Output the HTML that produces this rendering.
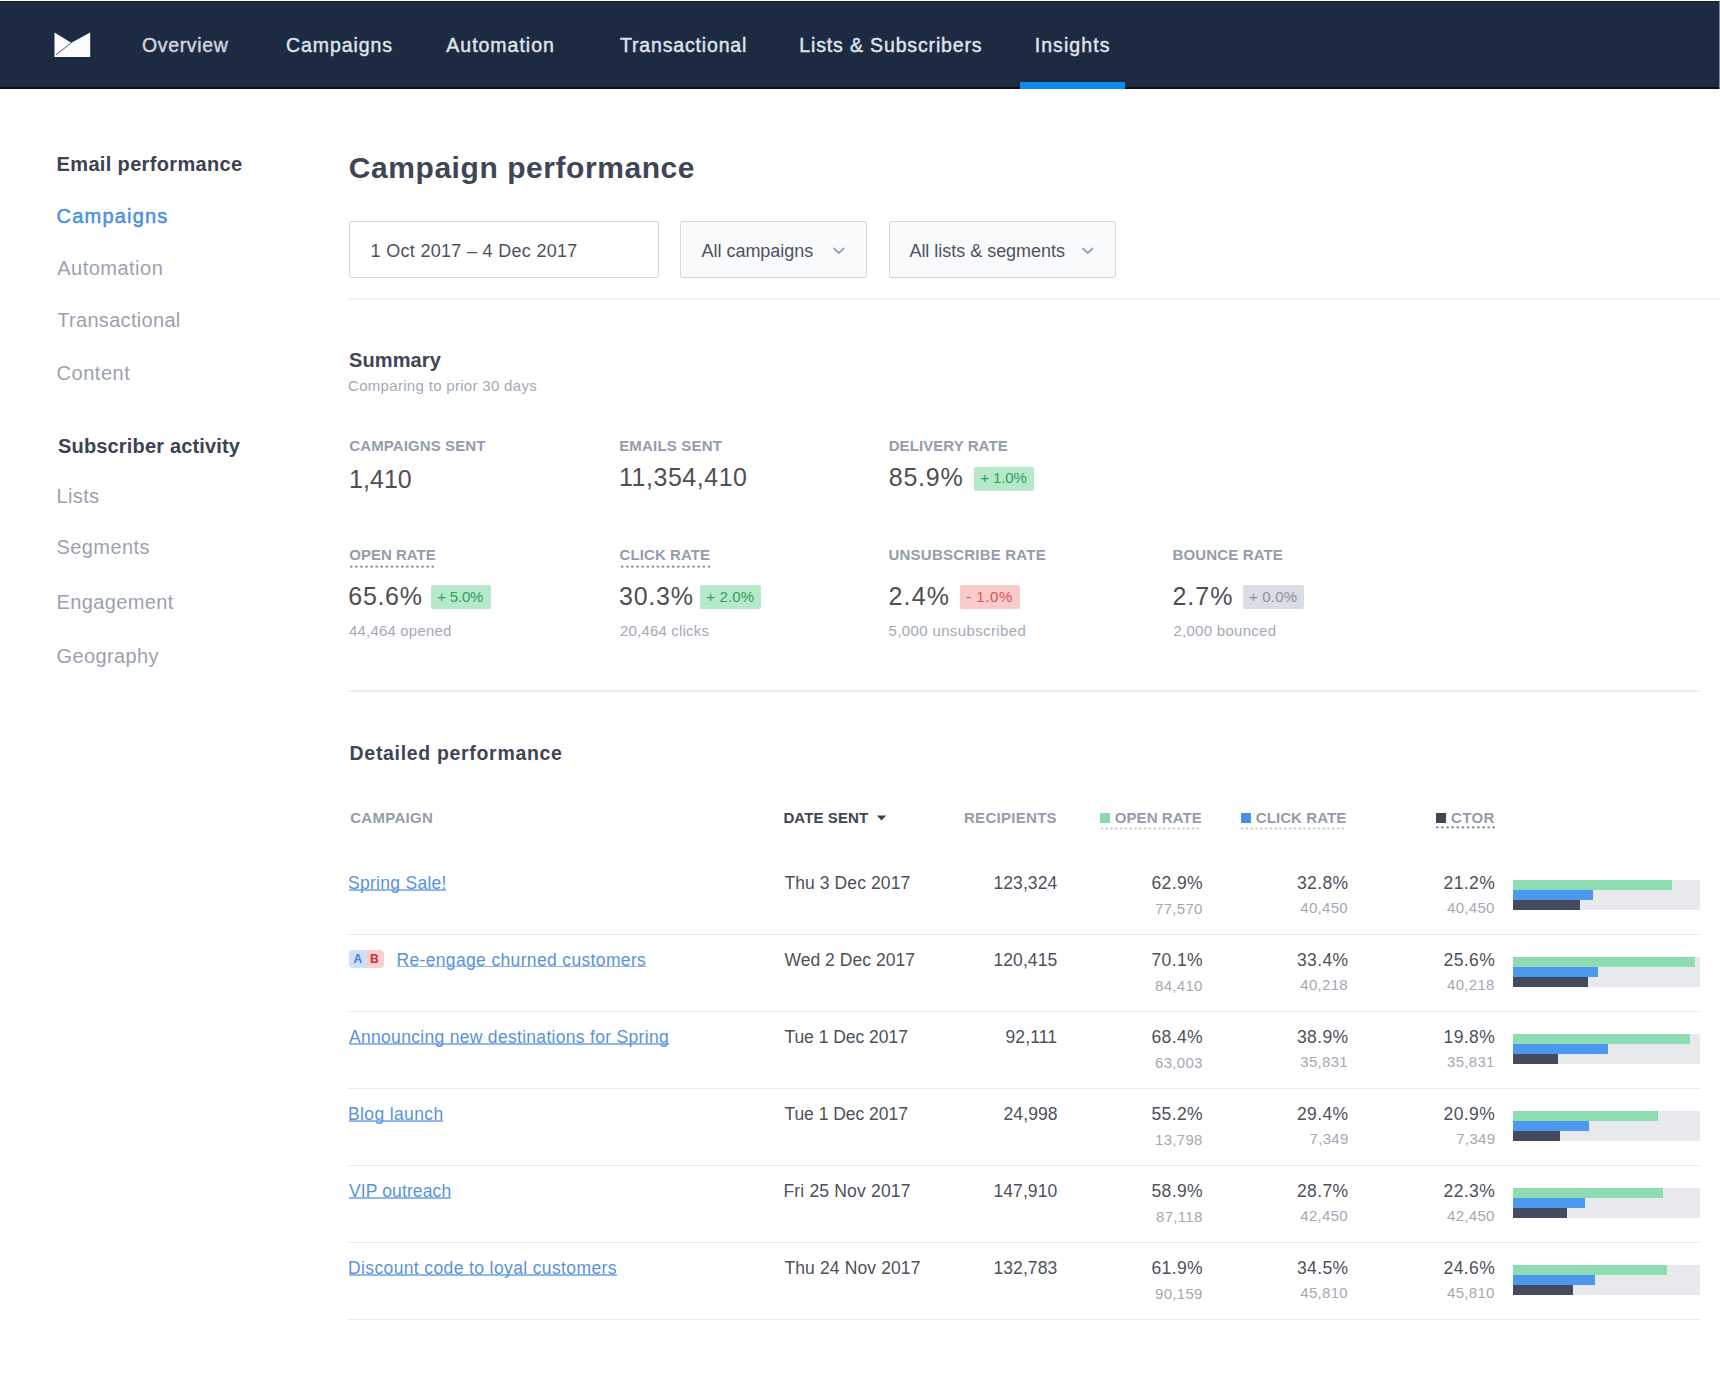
<!DOCTYPE html>
<html><head><meta charset="utf-8"><title>Campaign performance</title>
<style>
html,body{margin:0;padding:0;background:#fff;width:1720px;height:1396px;overflow:hidden;position:relative}
.t{position:absolute;white-space:pre;font-family:"Liberation Sans", sans-serif}
.r{position:absolute}
</style></head><body>
<div class=r style="left:0;top:0;width:1720px;height:1px;background:#fff"></div>
<div class=r style="left:0;top:1px;width:1719px;height:87px;background:#1c2a42"></div>
<div class=r style="left:0;top:1px;width:1719px;height:1px;background:#141c2a"></div>
<div class=r style="left:0;top:87px;width:1719px;height:2px;background:#0b0f16"></div>
<div class=r style="left:1719px;top:1px;width:1px;height:88px;background:#7a879c"></div>
<svg class=r style="left:54px;top:32px" width="37" height="26" viewBox="0 0 37 26">
  <polygon points="0.5,0.5 17.3,10.8 36.2,0.5 36.2,25 0.5,25" fill="#fafbfc"/>
  <line x1="2.3" y1="22.6" x2="17.3" y2="10.8" stroke="#4a5568" stroke-width="1"/>
</svg>
<div class=r style="left:1020px;top:82px;width:105px;height:7px;background:#0f8bec"></div>

<div class=r style="left:349px;top:221px;width:308px;height:55px;border:1px solid #d6d9de;border-bottom:1.5px solid #d0d3d8;border-radius:3px;background:#fff"></div>
<div class=r style="left:680px;top:221px;width:184.5px;height:55px;border:1px solid #d6d9de;border-bottom:1.5px solid #d0d3d8;border-radius:3px;background:#f9fafb"></div>
<div class=r style="left:888.5px;top:221px;width:225px;height:55px;border:1px solid #d6d9de;border-bottom:1.5px solid #d0d3d8;border-radius:3px;background:#f9fafb"></div>
<svg class=r style="left:830px;top:244px" width="18" height="14" viewBox="0 0 18 14"><polyline points="4,4.5 8.8,9 13.6,4.5" fill="none" stroke="#9ea2ab" stroke-width="1.8" stroke-linecap="round" stroke-linejoin="round"/></svg>
<svg class=r style="left:1079px;top:244px" width="18" height="14" viewBox="0 0 18 14"><polyline points="4,4.5 8.8,9 13.6,4.5" fill="none" stroke="#9ea2ab" stroke-width="1.8" stroke-linecap="round" stroke-linejoin="round"/></svg>
<div class=r style="left:348px;top:298px;width:1372px;height:2px;background:#f0f1f3"></div>

<div class=r style="left:974px;top:467px;width:60px;height:23.5px;background:#b6e9c9;border-radius:2px"></div>
<div class=r style="left:431px;top:584.5px;width:60px;height:24.5px;background:#b6e9c9;border-radius:2px"></div>
<div class=r style="left:700px;top:584.5px;width:61px;height:24.5px;background:#b6e9c9;border-radius:2px"></div>
<div class=r style="left:959.5px;top:584.5px;width:60.5px;height:24.5px;background:#f9cbcb;border-radius:2px"></div>
<div class=r style="left:1243px;top:584.5px;width:61px;height:24.5px;background:#dadde3;border-radius:2px"></div>
<svg class=r style="left:350px;top:565px" width="86" height="3"><line x1="0" y1="1.6" x2="86" y2="1.6" stroke="#7f8592" stroke-width="1.7" stroke-dasharray="2.4 2.7"/></svg>
<svg class=r style="left:620.5px;top:565px" width="90" height="3"><line x1="0" y1="1.6" x2="90" y2="1.6" stroke="#7f8592" stroke-width="1.7" stroke-dasharray="2.4 2.7"/></svg>

<div class=r style="left:348px;top:690px;width:1352px;height:1.5px;background:#eceef0"></div>

<div class=r style="left:1099.7px;top:813.4px;width:10px;height:9.6px;background:#8dd9ad"></div>
<div class=r style="left:1241px;top:813.4px;width:10px;height:9.6px;background:#4a8ee6"></div>
<div class=r style="left:1436px;top:813.4px;width:10px;height:9.6px;background:#3f4756"></div>
<svg class=r style="left:1100.5px;top:826.5px" width="101" height="3"><line x1="0" y1="1.5" x2="102" y2="1.5" stroke="#b3b7bf" stroke-width="1.6" stroke-dasharray="2 2.8"/></svg>
<svg class=r style="left:1241px;top:826.5px" width="106" height="3"><line x1="0" y1="1.5" x2="106" y2="1.5" stroke="#b3b7bf" stroke-width="1.6" stroke-dasharray="2 2.8"/></svg>
<svg class=r style="left:1436px;top:826px" width="59" height="3"><line x1="0" y1="1.4" x2="59" y2="1.4" stroke="#7a808c" stroke-width="1.6" stroke-dasharray="2.5 2.64"/></svg>
<svg class=r style="left:876px;top:815px" width="11" height="6" viewBox="0 0 11 6"><polygon points="0.8,0.5 10.2,0.5 5.5,5.5" fill="#3e4656"/></svg>

<div class=r style="left:349px;top:950px;width:17.5px;height:17.5px;background:#d0e1f7;border-radius:4px 0 0 4px"></div>
<div class=r style="left:366.5px;top:950px;width:17px;height:17.5px;background:#f8cfd0;border-radius:0 4px 4px 0"></div>
<div class=t style="left:353.5px;top:953px;font-size:12px;line-height:12px;font-weight:700;color:#3d7fd9">A</div>
<div class=t style="left:370px;top:953px;font-size:12px;line-height:12px;font-weight:700;color:#c9302c">B</div>

<div class=r style='left:1513px;top:880px;width:187px;height:30px;background:#e8e9ec'></div><div class=r style='left:1513px;top:880px;width:159.0px;height:10px;background:#8edcb1'></div><div class=r style='left:1513px;top:890px;width:79.6px;height:10px;background:#4c98ef'></div><div class=r style='left:1513px;top:900px;width:66.8px;height:10px;background:#434b5c'></div><div class=r style='left:348px;top:933.5px;width:1352px;height:1.5px;background:#ebebed'></div><div class=r style='left:1513px;top:957px;width:187px;height:30px;background:#e8e9ec'></div><div class=r style='left:1513px;top:957px;width:182.4px;height:10px;background:#8edcb1'></div><div class=r style='left:1513px;top:967px;width:84.9px;height:10px;background:#4c98ef'></div><div class=r style='left:1513px;top:977px;width:74.6px;height:10px;background:#434b5c'></div><div class=r style='left:348px;top:1010.5px;width:1352px;height:1.5px;background:#ebebed'></div><div class=r style='left:1513px;top:1034px;width:187px;height:30px;background:#e8e9ec'></div><div class=r style='left:1513px;top:1034px;width:177.0px;height:10px;background:#8edcb1'></div><div class=r style='left:1513px;top:1044px;width:94.8px;height:10px;background:#4c98ef'></div><div class=r style='left:1513px;top:1054px;width:44.8px;height:10px;background:#434b5c'></div><div class=r style='left:348px;top:1087.5px;width:1352px;height:1.5px;background:#ebebed'></div><div class=r style='left:1513px;top:1111px;width:187px;height:30px;background:#e8e9ec'></div><div class=r style='left:1513px;top:1111px;width:144.9px;height:10px;background:#8edcb1'></div><div class=r style='left:1513px;top:1121px;width:76.0px;height:10px;background:#4c98ef'></div><div class=r style='left:1513px;top:1131px;width:47.3px;height:10px;background:#434b5c'></div><div class=r style='left:348px;top:1164.5px;width:1352px;height:1.5px;background:#ebebed'></div><div class=r style='left:1513px;top:1188px;width:187px;height:30px;background:#e8e9ec'></div><div class=r style='left:1513px;top:1188px;width:150.2px;height:10px;background:#8edcb1'></div><div class=r style='left:1513px;top:1198px;width:71.9px;height:10px;background:#4c98ef'></div><div class=r style='left:1513px;top:1208px;width:53.7px;height:10px;background:#434b5c'></div><div class=r style='left:348px;top:1241.5px;width:1352px;height:1.5px;background:#ebebed'></div><div class=r style='left:1513px;top:1265px;width:187px;height:30px;background:#e8e9ec'></div><div class=r style='left:1513px;top:1265px;width:154.0px;height:10px;background:#8edcb1'></div><div class=r style='left:1513px;top:1275px;width:82.0px;height:10px;background:#4c98ef'></div><div class=r style='left:1513px;top:1285px;width:60.0px;height:10px;background:#434b5c'></div><div class=r style='left:348px;top:1318.5px;width:1352px;height:1.5px;background:#ebebed'></div><div class=r style='left:348.5px;top:889.0px;width:97.1px;height:1.5px;background:#92b9ee'></div><div class=r style='left:396.9px;top:965.7px;width:249.2px;height:1.5px;background:#92b9ee'></div><div class=r style='left:348.5px;top:1043.0px;width:320.3px;height:1.5px;background:#92b9ee'></div><div class=r style='left:348.5px;top:1120.0px;width:94.7px;height:1.5px;background:#92b9ee'></div><div class=r style='left:348.5px;top:1197.0px;width:102.3px;height:1.5px;background:#92b9ee'></div><div class=r style='left:348.5px;top:1274.0px;width:268.7px;height:1.5px;background:#92b9ee'></div>
<div class=t style='left:142.00px;top:36px;font-size:19.5px;line-height:19.5px;font-weight:400;color:#cfd4dc;letter-spacing:0.643px;-webkit-text-stroke:0.45px #cfd4dc;'>Overview</div>
<div class=t style='left:286.00px;top:36px;font-size:19.5px;line-height:19.5px;font-weight:400;color:#dfe3e9;letter-spacing:0.913px;-webkit-text-stroke:0.45px #dfe3e9;'>Campaigns</div>
<div class=t style='left:446.30px;top:36px;font-size:19.5px;line-height:19.5px;font-weight:400;color:#dfe3e9;letter-spacing:0.989px;-webkit-text-stroke:0.45px #dfe3e9;'>Automation</div>
<div class=t style='left:620.00px;top:36px;font-size:19.5px;line-height:19.5px;font-weight:400;color:#dfe3e9;letter-spacing:0.833px;-webkit-text-stroke:0.45px #dfe3e9;'>Transactional</div>
<div class=t style='left:799.30px;top:36px;font-size:19.5px;line-height:19.5px;font-weight:400;color:#dfe3e9;letter-spacing:0.856px;-webkit-text-stroke:0.45px #dfe3e9;'>Lists &amp; Subscribers</div>
<div class=t style='left:1034.70px;top:36px;font-size:19.5px;line-height:19.5px;font-weight:400;color:#dfe3e9;letter-spacing:1.071px;-webkit-text-stroke:0.45px #dfe3e9;'>Insights</div>
<div class=t style='left:56.60px;top:154px;font-size:20px;line-height:20px;font-weight:700;color:#3b4252;letter-spacing:0.344px;'>Email performance</div>
<div class=t style='left:56.60px;top:206px;font-size:20px;line-height:20px;font-weight:400;color:#4a90e2;letter-spacing:1.200px;-webkit-text-stroke:0.5px #4a90e2;'>Campaigns</div>
<div class=t style='left:57.20px;top:258px;font-size:20px;line-height:20px;font-weight:400;color:#9ba2ae;letter-spacing:0.489px;'>Automation</div>
<div class=t style='left:57.20px;top:310px;font-size:20px;line-height:20px;font-weight:400;color:#9ba2ae;letter-spacing:0.317px;'>Transactional</div>
<div class=t style='left:56.60px;top:363px;font-size:20px;line-height:20px;font-weight:400;color:#9ba2ae;letter-spacing:0.517px;'>Content</div>
<div class=t style='left:58.00px;top:436px;font-size:20px;line-height:20px;font-weight:700;color:#3b4252;letter-spacing:0.167px;'>Subscriber activity</div>
<div class=t style='left:56.50px;top:486px;font-size:20px;line-height:20px;font-weight:400;color:#9ba2ae;letter-spacing:0.375px;'>Lists</div>
<div class=t style='left:56.50px;top:537px;font-size:20px;line-height:20px;font-weight:400;color:#9ba2ae;letter-spacing:0.429px;'>Segments</div>
<div class=t style='left:56.50px;top:592px;font-size:20px;line-height:20px;font-weight:400;color:#9ba2ae;letter-spacing:0.389px;'>Engagement</div>
<div class=t style='left:56.50px;top:646px;font-size:20px;line-height:20px;font-weight:400;color:#9ba2ae;letter-spacing:0.375px;'>Geography</div>
<div class=t style='left:348.80px;top:153px;font-size:30px;line-height:30px;font-weight:700;color:#3e4656;letter-spacing:0.558px;'>Campaign performance</div>
<div class=t style='left:370.60px;top:242px;font-size:18px;line-height:18px;font-weight:400;color:#4d5260;letter-spacing:0.300px;'>1 Oct 2017 – 4 Dec 2017</div>
<div class=t style='left:701.60px;top:242px;font-size:18px;line-height:18px;font-weight:400;color:#4d5260;letter-spacing:-0.033px;'>All campaigns</div>
<div class=t style='left:909.40px;top:242px;font-size:18px;line-height:18px;font-weight:400;color:#4d5260;letter-spacing:-0.021px;'>All lists &amp; segments</div>
<div class=t style='left:349.10px;top:350px;font-size:20px;line-height:20px;font-weight:700;color:#3e4656;letter-spacing:0.100px;'>Summary</div>
<div class=t style='left:348.00px;top:378px;font-size:15px;line-height:15px;font-weight:400;color:#a3a9b4;letter-spacing:0.312px;'>Comparing to prior 30 days</div>
<div class=t style='left:349.30px;top:438px;font-size:15px;line-height:15px;font-weight:700;color:#959cab;letter-spacing:0.100px;'>CAMPAIGNS SENT</div>
<div class=t style='left:619.20px;top:438px;font-size:15px;line-height:15px;font-weight:700;color:#959cab;letter-spacing:0.180px;'>EMAILS SENT</div>
<div class=t style='left:888.70px;top:438px;font-size:15px;line-height:15px;font-weight:700;color:#959cab;letter-spacing:0.075px;'>DELIVERY RATE</div>
<div class=t style='left:349.00px;top:467px;font-size:25px;line-height:25px;font-weight:400;color:#4f4f52;letter-spacing:0.050px;'>1,410</div>
<div class=t style='left:619.00px;top:465px;font-size:25px;line-height:25px;font-weight:400;color:#4f4f52;letter-spacing:0.522px;'>11,354,410</div>
<div class=t style='left:888.70px;top:465px;font-size:25px;line-height:25px;font-weight:400;color:#4f4f52;letter-spacing:0.800px;'>85.9%</div>
<div class=t style='left:980.30px;top:470px;font-size:15px;line-height:15px;font-weight:400;color:#2e9e5b;letter-spacing:-0.120px;'>+ 1.0%</div>
<div class=t style='left:349.30px;top:547px;font-size:15px;line-height:15px;font-weight:700;color:#959cab;letter-spacing:0.000px;'>OPEN RATE</div>
<div class=t style='left:619.60px;top:547px;font-size:15px;line-height:15px;font-weight:700;color:#959cab;letter-spacing:0.078px;'>CLICK RATE</div>
<div class=t style='left:888.50px;top:547px;font-size:15px;line-height:15px;font-weight:700;color:#959cab;letter-spacing:0.220px;'>UNSUBSCRIBE RATE</div>
<div class=t style='left:1172.40px;top:547px;font-size:15px;line-height:15px;font-weight:700;color:#959cab;letter-spacing:0.160px;'>BOUNCE RATE</div>
<div class=t style='left:348.30px;top:584px;font-size:25px;line-height:25px;font-weight:400;color:#4f4f52;letter-spacing:0.675px;'>65.6%</div>
<div class=t style='left:619.00px;top:584px;font-size:25px;line-height:25px;font-weight:400;color:#4f4f52;letter-spacing:0.750px;'>30.3%</div>
<div class=t style='left:888.50px;top:584px;font-size:25px;line-height:25px;font-weight:400;color:#4f4f52;letter-spacing:1.167px;'>2.4%</div>
<div class=t style='left:1172.40px;top:584px;font-size:25px;line-height:25px;font-weight:400;color:#4f4f52;letter-spacing:1.067px;'>2.7%</div>
<div class=t style='left:437.20px;top:589px;font-size:15px;line-height:15px;font-weight:400;color:#2e9e5b;letter-spacing:-0.180px;'>+ 5.0%</div>
<div class=t style='left:706.20px;top:589px;font-size:15px;line-height:15px;font-weight:400;color:#2e9e5b;letter-spacing:0.160px;'>+ 2.0%</div>
<div class=t style='left:966.00px;top:589px;font-size:15px;line-height:15px;font-weight:400;color:#d9534f;letter-spacing:0.600px;'>- 1.0%</div>
<div class=t style='left:1249.00px;top:589px;font-size:15px;line-height:15px;font-weight:400;color:#8c93a0;letter-spacing:0.200px;'>+ 0.0%</div>
<div class=t style='left:349.00px;top:623px;font-size:15px;line-height:15px;font-weight:400;color:#a3a9b4;letter-spacing:0.183px;'>44,464 opened</div>
<div class=t style='left:620.00px;top:623px;font-size:15px;line-height:15px;font-weight:400;color:#a3a9b4;letter-spacing:0.183px;'>20,464 clicks</div>
<div class=t style='left:888.50px;top:623px;font-size:15px;line-height:15px;font-weight:400;color:#a3a9b4;letter-spacing:0.371px;'>5,000 unsubscribed</div>
<div class=t style='left:1173.40px;top:623px;font-size:15px;line-height:15px;font-weight:400;color:#a3a9b4;letter-spacing:0.283px;'>2,000 bounced</div>
<div class=t style='left:349.60px;top:744px;font-size:19.5px;line-height:19.5px;font-weight:700;color:#3e4656;letter-spacing:0.679px;'>Detailed performance</div>
<div class=t style='left:350.20px;top:810px;font-size:15px;line-height:15px;font-weight:700;color:#959cab;letter-spacing:0.286px;'>CAMPAIGN</div>
<div class=t style='left:783.40px;top:810px;font-size:15px;line-height:15px;font-weight:700;color:#3e4656;letter-spacing:0.100px;'>DATE SENT</div>
<div class=t style='left:964.00px;top:810px;font-size:15px;line-height:15px;font-weight:700;color:#959cab;letter-spacing:0.289px;'>RECIPIENTS</div>
<div class=t style='left:1114.80px;top:810px;font-size:15px;line-height:15px;font-weight:700;color:#959cab;letter-spacing:0.075px;'>OPEN RATE</div>
<div class=t style='left:1255.80px;top:810px;font-size:15px;line-height:15px;font-weight:700;color:#959cab;letter-spacing:0.078px;'>CLICK RATE</div>
<div class=t style='left:1451.10px;top:810px;font-size:15px;line-height:15px;font-weight:700;color:#959cab;letter-spacing:0.367px;'>CTOR</div>
<div class=t style='left:348.00px;top:875px;font-size:17.5px;line-height:17.5px;font-weight:400;color:#5a92da;letter-spacing:0.282px;'>Spring Sale!</div>
<div class=t style='left:784.40px;top:875px;font-size:17.5px;line-height:17.5px;font-weight:400;color:#4d515b;letter-spacing:0.100px;'>Thu 3 Dec 2017</div>
<div class=t style='left:993.40px;top:875px;font-size:17.5px;line-height:17.5px;font-weight:400;color:#4d515b;letter-spacing:0.100px;'>123,324</div>
<div class=t style='left:1151.40px;top:875px;font-size:17.5px;line-height:17.5px;font-weight:400;color:#4d515b;letter-spacing:0.400px;'>62.9%</div>
<div class=t style='left:1155.00px;top:901px;font-size:15px;line-height:15px;font-weight:400;color:#a3a9b4;letter-spacing:0.300px;'>77,570</div>
<div class=t style='left:1296.90px;top:875px;font-size:17.5px;line-height:17.5px;font-weight:400;color:#4d515b;letter-spacing:0.400px;'>32.8%</div>
<div class=t style='left:1300.30px;top:900px;font-size:15px;line-height:15px;font-weight:400;color:#a3a9b4;letter-spacing:0.300px;'>40,450</div>
<div class=t style='left:1443.60px;top:875px;font-size:17.5px;line-height:17.5px;font-weight:400;color:#4d515b;letter-spacing:0.400px;'>21.2%</div>
<div class=t style='left:1447.00px;top:900px;font-size:15px;line-height:15px;font-weight:400;color:#a3a9b4;letter-spacing:0.300px;'>40,450</div>
<div class=t style='left:396.40px;top:952px;font-size:17.5px;line-height:17.5px;font-weight:400;color:#5a92da;letter-spacing:0.354px;'>Re-engage churned customers</div>
<div class=t style='left:784.40px;top:952px;font-size:17.5px;line-height:17.5px;font-weight:400;color:#4d515b;letter-spacing:0.046px;'>Wed 2 Dec 2017</div>
<div class=t style='left:993.40px;top:952px;font-size:17.5px;line-height:17.5px;font-weight:400;color:#4d515b;letter-spacing:0.100px;'>120,415</div>
<div class=t style='left:1151.40px;top:952px;font-size:17.5px;line-height:17.5px;font-weight:400;color:#4d515b;letter-spacing:0.400px;'>70.1%</div>
<div class=t style='left:1155.00px;top:978px;font-size:15px;line-height:15px;font-weight:400;color:#a3a9b4;letter-spacing:0.300px;'>84,410</div>
<div class=t style='left:1296.90px;top:952px;font-size:17.5px;line-height:17.5px;font-weight:400;color:#4d515b;letter-spacing:0.400px;'>33.4%</div>
<div class=t style='left:1300.30px;top:977px;font-size:15px;line-height:15px;font-weight:400;color:#a3a9b4;letter-spacing:0.300px;'>40,218</div>
<div class=t style='left:1443.60px;top:952px;font-size:17.5px;line-height:17.5px;font-weight:400;color:#4d515b;letter-spacing:0.400px;'>25.6%</div>
<div class=t style='left:1447.00px;top:977px;font-size:15px;line-height:15px;font-weight:400;color:#a3a9b4;letter-spacing:0.300px;'>40,218</div>
<div class=t style='left:349.00px;top:1029px;font-size:17.5px;line-height:17.5px;font-weight:400;color:#5a92da;letter-spacing:0.305px;'>Announcing new destinations for Spring</div>
<div class=t style='left:784.40px;top:1029px;font-size:17.5px;line-height:17.5px;font-weight:400;color:#4d515b;letter-spacing:-0.031px;'>Tue 1 Dec 2017</div>
<div class=t style='left:1005.50px;top:1029px;font-size:17.5px;line-height:17.5px;font-weight:400;color:#4d515b;letter-spacing:0.100px;'>92,111</div>
<div class=t style='left:1151.40px;top:1029px;font-size:17.5px;line-height:17.5px;font-weight:400;color:#4d515b;letter-spacing:0.400px;'>68.4%</div>
<div class=t style='left:1155.00px;top:1055px;font-size:15px;line-height:15px;font-weight:400;color:#a3a9b4;letter-spacing:0.300px;'>63,003</div>
<div class=t style='left:1296.90px;top:1029px;font-size:17.5px;line-height:17.5px;font-weight:400;color:#4d515b;letter-spacing:0.400px;'>38.9%</div>
<div class=t style='left:1300.30px;top:1054px;font-size:15px;line-height:15px;font-weight:400;color:#a3a9b4;letter-spacing:0.300px;'>35,831</div>
<div class=t style='left:1443.60px;top:1029px;font-size:17.5px;line-height:17.5px;font-weight:400;color:#4d515b;letter-spacing:0.400px;'>19.8%</div>
<div class=t style='left:1447.00px;top:1054px;font-size:15px;line-height:15px;font-weight:400;color:#a3a9b4;letter-spacing:0.300px;'>35,831</div>
<div class=t style='left:348.00px;top:1106px;font-size:17.5px;line-height:17.5px;font-weight:400;color:#5a92da;letter-spacing:0.370px;'>Blog launch</div>
<div class=t style='left:784.40px;top:1106px;font-size:17.5px;line-height:17.5px;font-weight:400;color:#4d515b;letter-spacing:-0.031px;'>Tue 1 Dec 2017</div>
<div class=t style='left:1003.50px;top:1106px;font-size:17.5px;line-height:17.5px;font-weight:400;color:#4d515b;letter-spacing:0.100px;'>24,998</div>
<div class=t style='left:1151.40px;top:1106px;font-size:17.5px;line-height:17.5px;font-weight:400;color:#4d515b;letter-spacing:0.400px;'>55.2%</div>
<div class=t style='left:1155.00px;top:1132px;font-size:15px;line-height:15px;font-weight:400;color:#a3a9b4;letter-spacing:0.300px;'>13,798</div>
<div class=t style='left:1296.90px;top:1106px;font-size:17.5px;line-height:17.5px;font-weight:400;color:#4d515b;letter-spacing:0.400px;'>29.4%</div>
<div class=t style='left:1309.60px;top:1131px;font-size:15px;line-height:15px;font-weight:400;color:#a3a9b4;letter-spacing:0.300px;'>7,349</div>
<div class=t style='left:1443.60px;top:1106px;font-size:17.5px;line-height:17.5px;font-weight:400;color:#4d515b;letter-spacing:0.400px;'>20.9%</div>
<div class=t style='left:1456.30px;top:1131px;font-size:15px;line-height:15px;font-weight:400;color:#a3a9b4;letter-spacing:0.300px;'>7,349</div>
<div class=t style='left:349.00px;top:1183px;font-size:17.5px;line-height:17.5px;font-weight:400;color:#5a92da;letter-spacing:0.118px;'>VIP outreach</div>
<div class=t style='left:783.40px;top:1183px;font-size:17.5px;line-height:17.5px;font-weight:400;color:#4d515b;letter-spacing:0.186px;'>Fri 25 Nov 2017</div>
<div class=t style='left:993.40px;top:1183px;font-size:17.5px;line-height:17.5px;font-weight:400;color:#4d515b;letter-spacing:0.100px;'>147,910</div>
<div class=t style='left:1151.40px;top:1183px;font-size:17.5px;line-height:17.5px;font-weight:400;color:#4d515b;letter-spacing:0.400px;'>58.9%</div>
<div class=t style='left:1156.00px;top:1209px;font-size:15px;line-height:15px;font-weight:400;color:#a3a9b4;letter-spacing:0.300px;'>87,118</div>
<div class=t style='left:1296.90px;top:1183px;font-size:17.5px;line-height:17.5px;font-weight:400;color:#4d515b;letter-spacing:0.400px;'>28.7%</div>
<div class=t style='left:1300.30px;top:1208px;font-size:15px;line-height:15px;font-weight:400;color:#a3a9b4;letter-spacing:0.300px;'>42,450</div>
<div class=t style='left:1443.60px;top:1183px;font-size:17.5px;line-height:17.5px;font-weight:400;color:#4d515b;letter-spacing:0.400px;'>22.3%</div>
<div class=t style='left:1447.00px;top:1208px;font-size:15px;line-height:15px;font-weight:400;color:#a3a9b4;letter-spacing:0.300px;'>42,450</div>
<div class=t style='left:348.00px;top:1260px;font-size:17.5px;line-height:17.5px;font-weight:400;color:#5a92da;letter-spacing:0.377px;'>Discount code to loyal customers</div>
<div class=t style='left:784.40px;top:1260px;font-size:17.5px;line-height:17.5px;font-weight:400;color:#4d515b;letter-spacing:0.129px;'>Thu 24 Nov 2017</div>
<div class=t style='left:993.40px;top:1260px;font-size:17.5px;line-height:17.5px;font-weight:400;color:#4d515b;letter-spacing:0.100px;'>132,783</div>
<div class=t style='left:1151.40px;top:1260px;font-size:17.5px;line-height:17.5px;font-weight:400;color:#4d515b;letter-spacing:0.400px;'>61.9%</div>
<div class=t style='left:1155.00px;top:1286px;font-size:15px;line-height:15px;font-weight:400;color:#a3a9b4;letter-spacing:0.300px;'>90,159</div>
<div class=t style='left:1296.90px;top:1260px;font-size:17.5px;line-height:17.5px;font-weight:400;color:#4d515b;letter-spacing:0.400px;'>34.5%</div>
<div class=t style='left:1300.30px;top:1285px;font-size:15px;line-height:15px;font-weight:400;color:#a3a9b4;letter-spacing:0.300px;'>45,810</div>
<div class=t style='left:1443.60px;top:1260px;font-size:17.5px;line-height:17.5px;font-weight:400;color:#4d515b;letter-spacing:0.400px;'>24.6%</div>
<div class=t style='left:1447.00px;top:1285px;font-size:15px;line-height:15px;font-weight:400;color:#a3a9b4;letter-spacing:0.300px;'>45,810</div>
</body></html>
